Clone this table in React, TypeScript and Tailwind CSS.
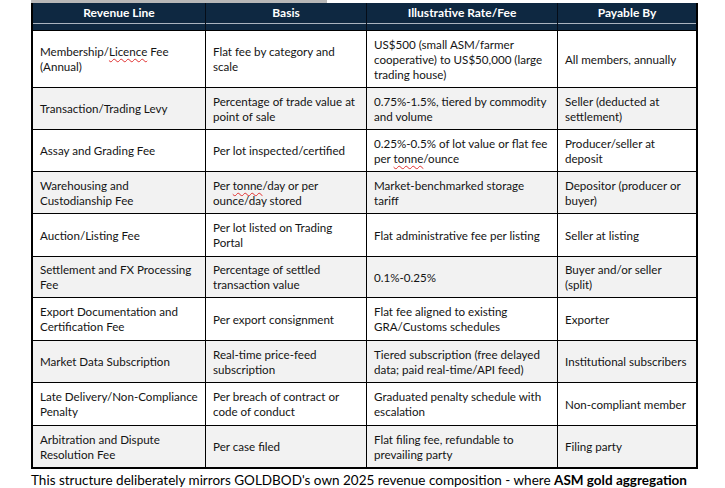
import React from "react";

const Sq = ({ children }: { children: React.ReactNode }) => (
  <span className="underline decoration-wavy decoration-[#e03030] decoration-1 underline-offset-2">{children}</span>
);

type Line = React.ReactNode;

const rows: { h: string; gray: boolean; cells: Line[][] }[] = [
  {
    h: "h-[57px]",
    gray: false,
    cells: [
      [<>Membership/<Sq>Licence</Sq> Fee</>, "(Annual)"],
      ["Flat fee by category and", "scale"],
      ["US$500 (small ASM/farmer", "cooperative) to US$50,000 (large", "trading house)"],
      ["All members, annually"],
    ],
  },
  {
    h: "h-[42px]",
    gray: true,
    cells: [
      ["Transaction/Trading Levy"],
      ["Percentage of trade value at", "point of sale"],
      ["0.75%-1.5%, tiered by commodity", "and volume"],
      ["Seller (deducted at", "settlement)"],
    ],
  },
  {
    h: "h-[42px]",
    gray: false,
    cells: [
      ["Assay and Grading Fee"],
      ["Per lot inspected/certified"],
      ["0.25%-0.5% of lot value or flat fee", <>per <Sq>tonne</Sq>/ounce</>],
      ["Producer/seller at", "deposit"],
    ],
  },
  {
    h: "h-[42px]",
    gray: true,
    cells: [
      ["Warehousing and", "Custodianship Fee"],
      [<>Per <Sq>tonne</Sq>/day or per</>, "ounce/day stored"],
      ["Market-benchmarked storage", "tariff"],
      ["Depositor (producer or", "buyer)"],
    ],
  },
  {
    h: "h-[43px]",
    gray: false,
    cells: [
      ["Auction/Listing Fee"],
      ["Per lot listed on Trading", "Portal"],
      ["Flat administrative fee per listing"],
      ["Seller at listing"],
    ],
  },
  {
    h: "h-[41px]",
    gray: true,
    cells: [
      ["Settlement and FX Processing", "Fee"],
      ["Percentage of settled", "transaction value"],
      ["0.1%-0.25%"],
      ["Buyer and/or seller", "(split)"],
    ],
  },
  {
    h: "h-[43px]",
    gray: false,
    cells: [
      ["Export Documentation and", "Certification Fee"],
      ["Per export consignment"],
      ["Flat fee aligned to existing", "GRA/Customs schedules"],
      ["Exporter"],
    ],
  },
  {
    h: "h-[42px]",
    gray: true,
    cells: [
      ["Market Data Subscription"],
      ["Real-time price-feed", "subscription"],
      ["Tiered subscription (free delayed", "data; paid real-time/API feed)"],
      ["Institutional subscribers"],
    ],
  },
  {
    h: "h-[43px]",
    gray: false,
    cells: [
      ["Late Delivery/Non-Compliance", "Penalty"],
      ["Per breach of contract or", "code of conduct"],
      ["Graduated penalty schedule with", "escalation"],
      ["Non-compliant member"],
    ],
  },
  {
    h: "h-[42px]",
    gray: true,
    cells: [
      ["Arbitration and Dispute", "Resolution Fee"],
      ["Per case filed"],
      ["Flat filing fee, refundable to", "prevailing party"],
      ["Filing party"],
    ],
  },
];

const headers = ["Revenue Line", "Basis", "Illustrative Rate/Fee", "Payable By"];

export default function App() {
  return (
    <div
      className="w-[725px] h-[488px] overflow-hidden bg-white text-[#141414]"
      style={{ fontFamily: "Lato, 'Liberation Sans', sans-serif" }}
    >
      <div className="ml-[31px] w-[667px]">
        <div className="h-[3px] w-[296px] bg-[#b8b8b8]" />
        <div className="border-x-2 border-b-2 border-black">
          <div className="grid grid-cols-[173px_161px_191px_138px] bg-[#0e2841] text-white font-bold text-[12px]">
            {headers.map((t, i) => (
              <div key={i} className={`h-[27px] flex flex-col ${i < 3 ? "border-r border-[#050d18]" : ""}`}>
                <div className="h-[20px] flex items-center justify-center">{t}</div>
                <div className="h-px bg-[#aab4c0]" />
              </div>
            ))}
          </div>
          {rows.map((r, ri) => (
            <div
              key={ri}
              className={`grid grid-cols-[173px_161px_191px_138px] border-t border-black text-[11.6px] leading-[15px] ${r.h} ${
                r.gray ? "bg-[#f2f2f2]" : "bg-white"
              }`}
            >
              {r.cells.map((lines, ci) => (
                <div key={ci} className={`flex items-center pl-[7px] pr-[2px] ${ci < 3 ? "border-r border-black" : ""}`}>
                  <div className="flex flex-col whitespace-nowrap">
                    {lines.map((l, li) => (
                      <span key={li}>{l}</span>
                    ))}
                  </div>
                </div>
              ))}
            </div>
          ))}
        </div>
        <div className="text-[13.5px] leading-[18px] mt-[2px] text-black whitespace-nowrap">
          This structure deliberately mirrors GOLDBOD's own 2025 revenue composition - where{" "}
          <span className="font-bold">ASM gold aggregation</span>
        </div>
      </div>
    </div>
  );
}
